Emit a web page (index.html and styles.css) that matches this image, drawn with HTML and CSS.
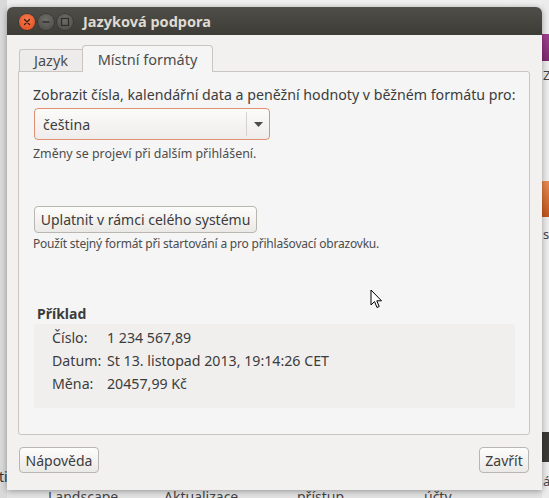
FILE: index.html
```html
<!DOCTYPE html>
<html lang="cs">
<head>
<meta charset="utf-8">
<title>Jazyková podpora</title>
<link rel="stylesheet" href="styles.css">
</head>
<body>
<div class="desk">
  <div class="bg-left"><span class="frag-ti">ti</span></div>
  <div class="bg-right">
    <div class="r-purple"></div>
    <div class="r-z">Z</div>
    <div class="r-orange"></div>
    <div class="r-s">s</div>
    <div class="r-dark"></div>
    <div class="r-a">á</div>
  </div>
  <div class="bg-bottom">
    <span class="b1">Landscape</span>
    <span class="b2">Aktualizace</span>
    <span class="b3">přístup</span>
    <span class="b4">účty</span>
  </div>

  <div class="window">
    <div class="titlebar">
      <div class="wbtns">
        <span class="wbtn close"><svg width="16" height="16" viewBox="0 0 16 16"><path d="M5.5 5.5 L10.5 10.5 M10.5 5.5 L5.5 10.5" stroke="#3a1a10" stroke-width="1.2" stroke-linecap="round"/></svg></span>
        <span class="wbtn"><svg width="16" height="16" viewBox="0 0 16 16"><path d="M4.5 8 H11.5" stroke="#2e2d2a" stroke-width="1.4"/></svg></span>
        <span class="wbtn"><svg width="16" height="16" viewBox="0 0 16 16"><rect x="4.5" y="4.5" width="7" height="7" fill="none" stroke="#2e2d2a" stroke-width="1.2"/></svg></span>
      </div>
      <div class="title">Jazyková podpora</div>
    </div>
    <div class="body">
      <div class="tabs">
        <div class="tab">Jazyk</div>
        <div class="tab active">Místní formáty</div>
      </div>
      <div class="page">
        <p class="lead">Zobrazit čísla, kalendářní data a peněžní hodnoty v běžném formátu pro:</p>
        <div class="combo">
          <span class="combo-text">čeština</span>
          <span class="combo-sep"></span>
          <span class="combo-arrow"><svg width="9" height="5" viewBox="0 0 9 5"><path d="M0 0 H9 L4.5 5 Z" fill="#4c4c4c"/></svg></span>
        </div>
        <p class="hint">Změny se projeví při dalším přihlášení.</p>
        <div class="btn apply">Uplatnit v rámci celého systému</div>
        <p class="hint hint2">Použít stejný formát při startování a pro přihlašovací obrazovku.</p>
        <p class="ex-title">Příklad</p>
        <div class="example">
          <div class="row"><span class="lab">Číslo:</span><span>1 234 567,89</span></div>
          <div class="row"><span class="lab">Datum:</span><span>St 13. listopad 2013, 19:14:26 CET</span></div>
          <div class="row"><span class="lab">Měna:</span><span>20457,99 Kč</span></div>
        </div>
      </div>
      <div class="actions">
        <div class="btn help">Nápověda</div>
        <div class="btn close-btn">Zavřít</div>
      </div>
    </div>
  </div>

  <svg class="cursor" width="14" height="21" viewBox="0 0 14 21"><path d="M1 1 L1 16 L4.5 12.5 L7 18.5 L9.2 17.5 L6.8 11.8 L11.5 11.8 Z" fill="#fff" stroke="#000" stroke-width="1" stroke-linejoin="round"/></svg>
</div>
</body>
</html>
```

FILE: styles.css
```css
* { box-sizing: border-box; }
html, body { margin: 0; padding: 0; }
body {
  width: 549px;
  height: 498px;
  overflow: hidden;
  background: #e3e3e3;
  font-family: "Noto Sans", "DejaVu Sans", sans-serif;
  color: #3c3c3c;
}
.desk {
  position: relative;
  width: 549px;
  height: 498px;
  padding: 7px 0 0 7px;
  background: linear-gradient(#efefef, #e2e2e2);
}
.bg-left {
  position: absolute;
  left: 0; top: 0;
  width: 7px; height: 498px;
  background: #d9d9d9;
  overflow: hidden;
}
.frag-ti {
  position: absolute;
  left: -1px; top: 468px;
  font-size: 14px;
  line-height: 18px;
  color: #333;
}
.bg-right {
  position: absolute;
  left: 542px; top: 0;
  width: 7px; height: 498px;
  background: #ececec;
  overflow: hidden;
}
.r-purple { position: absolute; top: 34px; left: 0; width: 7px; height: 27px; background: linear-gradient(#a0418f, #7e2a6f); }
.r-z { position: absolute; top: 66px; left: 1px; font-size: 13px; color: #444; }
.r-orange { position: absolute; top: 181px; left: 0; width: 7px; height: 36px; background: linear-gradient(#e98a4f, #c0551d); }
.r-s { position: absolute; top: 225px; left: 1px; font-size: 13px; color: #444; }
.r-dark { position: absolute; top: 432px; left: 0; width: 7px; height: 30px; background: #3b3a36; }
.r-a { position: absolute; top: 472px; left: 1px; font-size: 13px; color: #444; }
.bg-bottom {
  position: absolute;
  left: 0; top: 490px;
  width: 549px; height: 8px;
  overflow: hidden;
  font-size: 14px;
  line-height: 18px;
  color: #444;
}
.bg-bottom span { position: absolute; top: -2px; }
.b1 { left: 48px; }
.b2 { left: 164px; }
.b3 { left: 297px; }
.b4 { left: 424px; }

.window {
  position: relative;
  width: 535px;
  height: 483px;
  border-radius: 6px 6px 0 0;
  box-shadow: 0 1px 6px rgba(0,0,0,0.35);
  display: flex;
  flex-direction: column;
  background: #f2f1f0;
}
.titlebar {
  height: 28px;
  flex: none;
  border-radius: 6px 6px 0 0;
  background: linear-gradient(#4f4e49, #3d3c37);
  display: flex;
  align-items: center;
  padding-left: 12px;
}
.wbtns { display: flex; gap: 3px; margin-top: 1px; }
.wbtn {
  width: 16px; height: 16px;
  border-radius: 50%;
  background: radial-gradient(circle at 50% 35%, #6e6d68, #4a4945);
  box-shadow: 0 0 0 0.5px #2b2a27;
  display: flex;
}
.wbtn.close { background: radial-gradient(circle at 50% 35%, #f57a4c, #df4a1c); }
.title {
  margin-left: 10px;
  font-weight: bold;
  font-size: 14.5px;
  color: #dfdbd2;
}
.body {
  flex: 1;
  padding: 10px 12px 0 11px;
  display: flex;
  flex-direction: column;
}
.tabs {
  display: flex;
  align-items: flex-end;
  height: 26px;
  padding-left: 1px;
  position: relative;
  z-index: 1;
}
.tab {
  width: 63px;
  height: 22px;
  text-align: center;
  font-size: 14.5px;
  line-height: 21px;
  border: 1px solid #c9c6c2;
  border-bottom: none;
  border-right: none;
  border-radius: 3px 0 0 0;
  background: #edeceb;
  color: #4c4c4c;
}
.tab.active {
  width: 131px;
  height: 27px;
  line-height: 26px;
  border-right: 1px solid #c9c6c2;
  border-radius: 4px 4px 0 0;
  background: #f5f5f5;
  margin-bottom: -1px;
}
.page {
  height: 364px;
  border: 1px solid #c9c6c2;
  border-radius: 0 3px 3px 3px;
  background: #f5f5f5;
  padding: 14px 15px 0 14px;
}
p { margin: 0; }
.lead { font-size: 14.2px; line-height: 18px; white-space: nowrap; }
.combo {
  margin: 4px 0 0 1px;
  width: 236px;
  height: 32px;
  border: 1px solid #df9070;
  border-radius: 4px;
  background: linear-gradient(#fbfbfa, #efedeb);
  display: flex;
  align-items: center;
}
.combo-text { flex: 1; padding-left: 8px; font-size: 14.2px; color: #3c3c3c; }
.combo-sep { width: 1px; height: 24px; background: #d6d3cf; }
.combo-arrow { width: 22px; display: flex; justify-content: center; }
.hint { font-size: 12.4px; line-height: 14px; color: #4c4c4c; white-space: nowrap; }
.hint2 { font-size: 12px; letter-spacing: -0.2px; }
.combo + .hint { margin-top: 7px; }
.btn {
  border: 1px solid #b9b5b0;
  border-radius: 4px;
  background: linear-gradient(#fdfdfc, #ebe9e6);
  font-size: 14px;
  color: #3c3c3c;
  display: flex;
  align-items: center;
  justify-content: center;
  height: 26px;
  white-space: nowrap;
}
.apply { margin: 45px 0 0 1px; width: 223px; height: 27px; }
.apply + .hint { margin-top: 4px; }
.ex-title { margin: 54px 0 0 4px; font-weight: bold; font-size: 14px; line-height: 18px; }
.example {
  margin: 1px 0 0 1px;
  width: 481px;
  height: 84px;
  background: #f0efee;
  border-radius: 2px;
  padding: 5px 0 0 18px;
}
.row { display: flex; font-size: 14.2px; line-height: 18px; height: 23px; white-space: nowrap; }
.lab { width: 55px; }
.actions {
  display: flex;
  justify-content: space-between;
  margin-top: 12px;
  padding: 0 1px 0 1px;
}
.help { width: 80px; height: 26px; }
.close-btn { width: 50px; height: 26px; }
.cursor {
  position: absolute;
  left: 370px;
  top: 289px;
}
```
